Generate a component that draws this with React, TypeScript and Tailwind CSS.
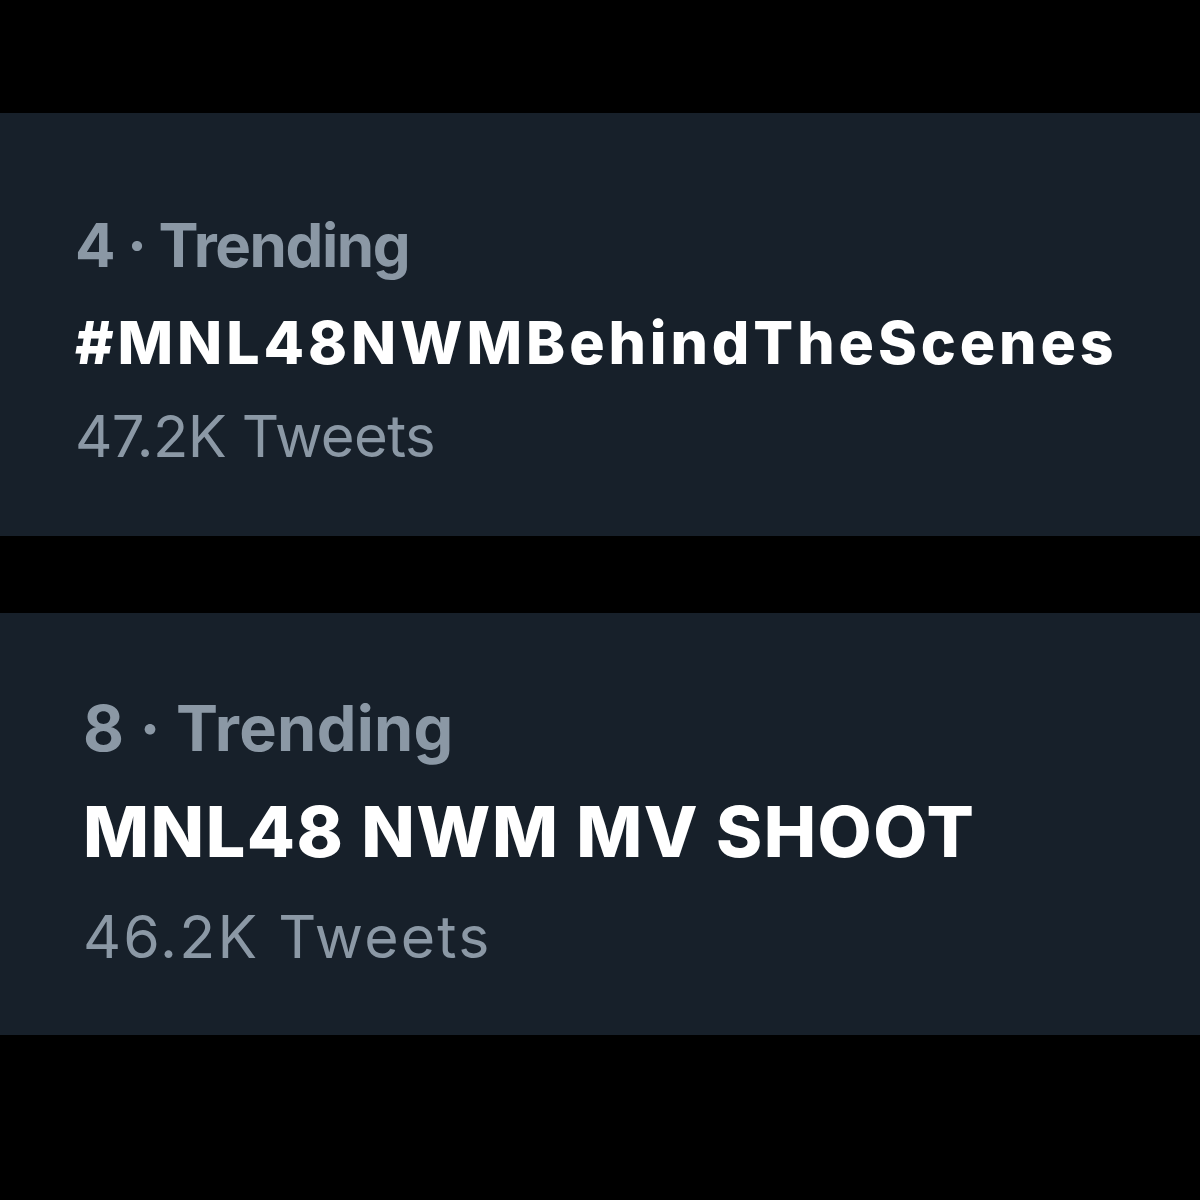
import React from "react";

export default function App() {
  return (
    <div className="w-[1200px] h-[1200px] bg-black pt-[113px] [font-family:Inter,'Liberation_Sans',sans-serif]">
      <div className="h-[423px] bg-[#17202a] pl-[75px] pt-[83px]">
        <div className="text-[60px] leading-[98px] font-bold tracking-[-1.4px] text-[#8b98a5] whitespace-nowrap">4 · Trending</div>
        <div className="text-[59px] leading-[98px] font-extrabold tracking-[3.9px] text-white whitespace-nowrap">#MNL48NWMBehindTheScenes</div>
        <div className="text-[58px] leading-[88px] tracking-[-0.6px] text-[#8b98a5] whitespace-nowrap">47.2K Tweets</div>
      </div>
      <div className="h-[77px]" />
      <div className="h-[422px] bg-[#17202a] pl-[83px] pt-[63px]">
        <div className="text-[63px] leading-[104px] font-bold tracking-[0.3px] text-[#8b98a5] whitespace-nowrap">8 · Trending</div>
        <div className="text-[70px] leading-[104px] font-extrabold tracking-[1.5px] text-white whitespace-nowrap">MNL48 NWM MV SHOOT</div>
        <div className="text-[59px] leading-[105px] tracking-[2.2px] text-[#8b98a5] whitespace-nowrap">46.2K Tweets</div>
      </div>
    </div>
  );
}
